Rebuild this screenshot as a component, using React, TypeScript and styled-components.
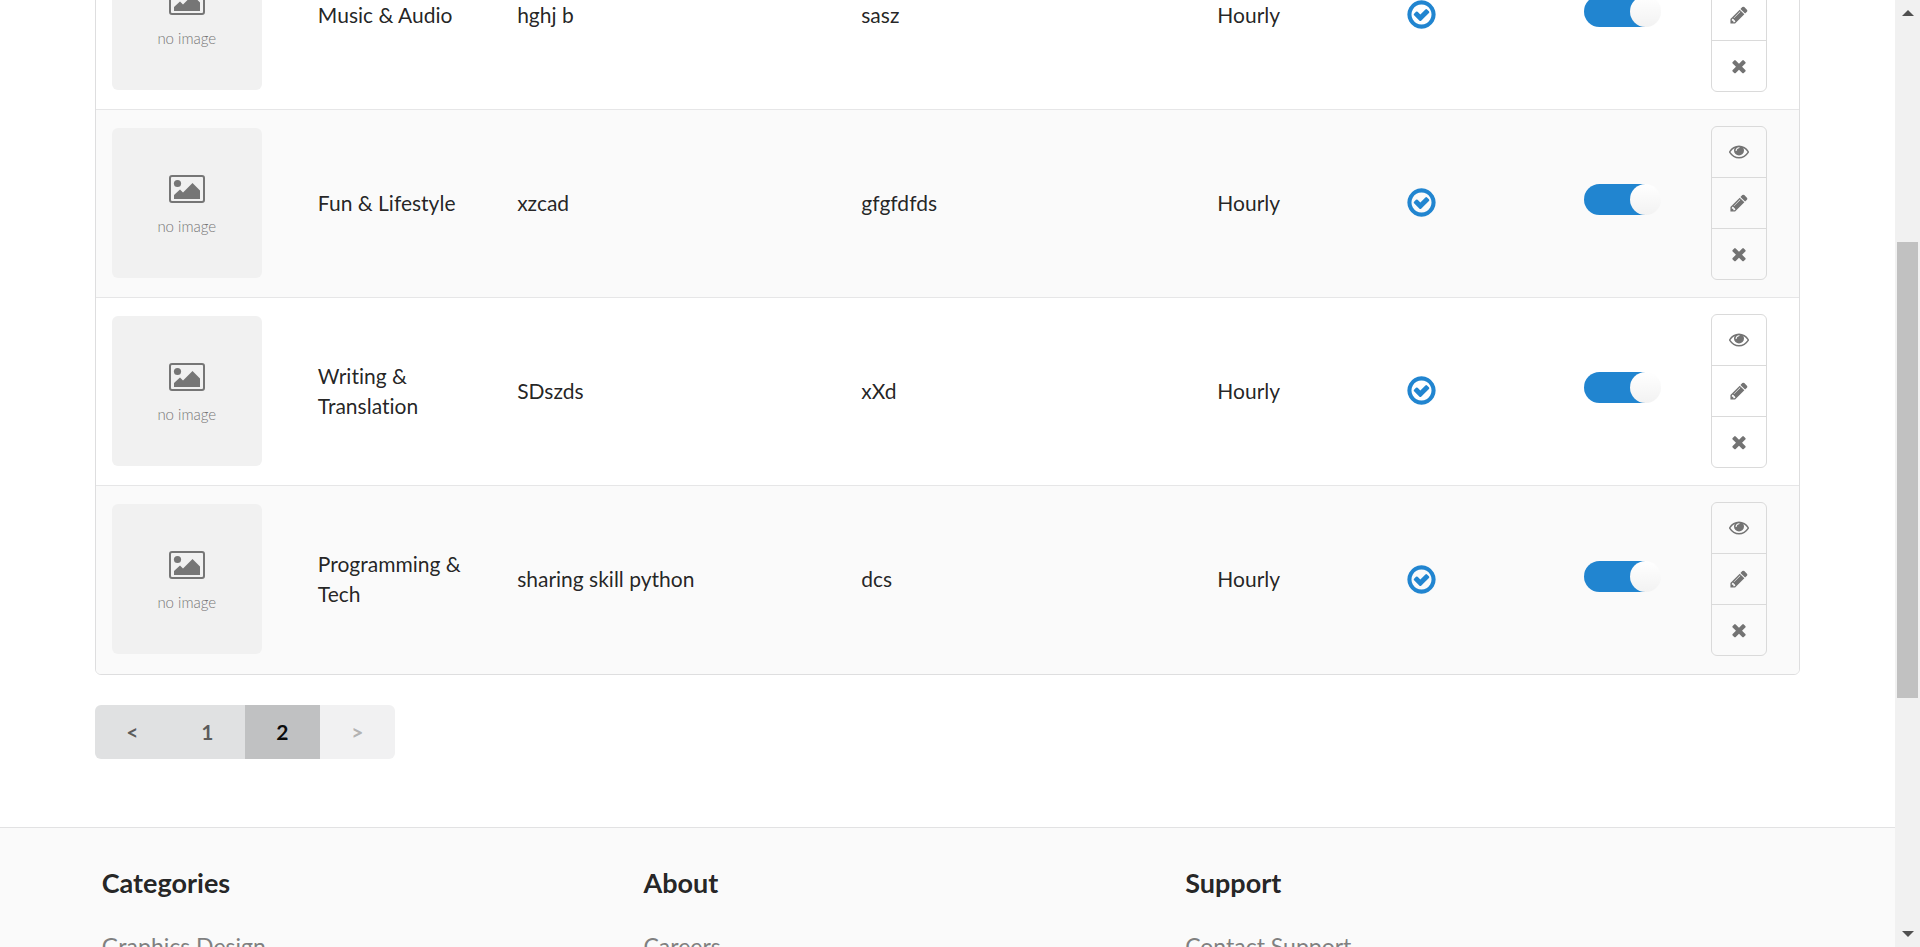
import React from "react";
import styled, { createGlobalStyle, css } from "styled-components";

const GlobalStyle = createGlobalStyle`
  *, *::before, *::after { box-sizing: border-box; }
  html, body, #root { height: 100%; }
  body {
    margin: 0;
    overflow: hidden;
    background: #fff;
    color: rgba(0, 0, 0, 0.87);
    font-family: Lato, "Helvetica Neue", Arial, sans-serif;
    font-size: 21px;
    font-variant-ligatures: no-common-ligatures;
    line-height: 30px;
  }
`;

const Shell = styled.div`
  display: flex;
  height: 100vh;
`;

const Page = styled.div`
  flex: 1;
  min-width: 0;
  overflow: hidden;
`;

const Container = styled.div`
  width: 90%;
  margin: 0 auto;
`;

const Listings = styled(Container).attrs({ as: "main" })`
  margin-top: -80px;
`;

const TableFrame = styled.div`
  border: 1px solid #dededf;
  border-radius: 6px;
  overflow: hidden;
`;

const Table = styled.table`
  width: 100%;
  table-layout: fixed;
  border-collapse: separate;
  border-spacing: 0;
`;

const Col = styled.col<{ $share: string }>`
  width: ${(p) => p.$share};
`;

const Row = styled.tr`
  height: 188px;
  &:nth-child(even) { background: #fafafa; }
  &:last-child { height: 189px; }
`;

const Cell = styled.td`
  padding: 0 16px 2px;
  border-top: 1px solid #e6e6e7;
  vertical-align: middle;
`;

const Thumb = styled.figure`
  display: flex;
  flex-direction: column;
  align-items: center;
  justify-content: center;
  gap: 14px;
  width: 150px;
  height: 150px;
  margin: 0;
  padding-top: 4px;
  border-radius: 6px;
  background: #f1f1f1;
  color: #767676;

  svg { display: block; }
  figcaption {
    font-size: 15px;
    font-weight: 300;
    line-height: 18px;
  }
`;

const ServiceMark = styled.svg`
  display: block;
  width: 33px;
  height: 33px;
  margin-left: -3px;
  fill: #2185d0;
`;

const Toggle = styled.input`
  appearance: none;
  display: block;
  width: 77px;
  height: 31px;
  margin: 0 0 6px;
  border-radius: 16px;
  background: linear-gradient(#2185d0, #2185d0) left / 62px 100% no-repeat;
  cursor: pointer;

  &::after {
    content: "";
    display: block;
    width: 31px;
    height: 31px;
    margin-left: auto;
    border-radius: 50%;
    background: #fff linear-gradient(transparent, rgba(0, 0, 0, 0.05));
  }
`;

const Actions = styled.div`
  display: flex;
  flex-direction: column;
  width: 56px;
  border: 1px solid #dadada;
  border-radius: 6px;
`;

const ActionButton = styled.button`
  display: flex;
  align-items: center;
  justify-content: center;
  height: 51px;
  padding: 0;
  border: 0;
  background: transparent;
  cursor: pointer;

  & + & { border-top: 1px solid #dadada; }
  &:first-child { height: 50px; }
  svg {
    width: 20px;
    height: 20px;
    fill: #737373;
  }
`;

const Pagination = styled.nav`
  display: inline-flex;
  margin: 30px 0 68px;
  border-radius: 6px;
  overflow: hidden;
`;

const PageButton = styled.button<{ $current?: boolean }>`
  width: 75px;
  height: 54px;
  padding: 0;
  border: 0;
  background: #e0e1e2;
  color: rgba(0, 0, 0, 0.6);
  font: bold 21px/30px Lato, sans-serif;
  cursor: pointer;

  ${(p) =>
    p.$current &&
    css`
      background: #c0c1c2;
      color: rgba(0, 0, 0, 0.95);
    `}
  &:disabled {
    background: #f1f1f2;
    color: #b3b3b3;
  }
`;

const Footer = styled.footer`
  padding: 38px 0;
  border-top: 1px solid #e2e2e3;
  background: #fafafa;
`;

const FooterGrid = styled.div`
  display: grid;
  grid-template-columns: 5fr 5fr 5fr 1fr;
  margin: 0 -14px;
`;

const FooterColumn = styled.section`
  padding: 0 21px;

  h3 {
    margin: 0 0 29px;
    font-size: 27px;
    line-height: 34px;
  }
  a {
    color: #808080;
    font-size: 23px;
    line-height: 34px;
    text-decoration: none;
  }
`;

const ScrollRail = styled.div`
  display: flex;
  flex-direction: column;
  width: 25px;
  height: 100%;
  padding: 10px 2px;
  background: #f1f1f1;

  svg {
    display: block;
    flex: none;
    margin: 0 auto;
    fill: #505050;
  }
`;

const ScrollTrack = styled.div`
  display: grid;
  flex: 1;
  grid-template-rows: 226fr 456fr 233fr;
`;

const ScrollThumb = styled.div`
  grid-row: 2;
  background: #c1c1c1;
`;

const icons = {
  check:
    "M1299 813l-422 422q-19 19-45 19t-45-19l-294-294q-19-19-19-45t19-45l102-102q19-19 45-19t45 19l147 147 275-275q19-19 45-19t45 19l102 102q19 19 19 45t-19 45zm141 83q0-148-73-273t-198-198-273-73-273 73-198 198-73 273 73 273 198 198 273 73 273-73 198-198 73-273zm224 0q0 209-103 385.5t-279.5 279.5-385.5 103-385.5-103-279.5-279.5-103-385.5 103-385.5 279.5-279.5 385.5-103 385.5 103 279.5 279.5 103 385.5z",
  view:
    "M1664 896q-152-236-381-353 61 104 61 225 0 185-131.5 316.5t-316.5 131.5-316.5-131.5-131.5-316.5q0-121 61-225-229 117-381 353 133 205 333.5 326.5t434.5 121.5 434.5-121.5 333.5-326.5zm-720-384q0-20-14-34t-34-14q-125 0-214.5 89.5t-89.5 214.5q0 20 14 34t34 14 34-14 14-34q0-86 61-147t147-61q20 0 34-14t14-34zm848 384q0 34-20 69-140 230-376.5 368.5t-499.5 138.5-499.5-139-376.5-368q-20-35-20-69t20-69q140-229 376.5-368t499.5-139 499.5 139 376.5 368q20 35 20 69z",
  edit:
    "M491 1536l91-91-235-235-91 91v107h128v128h107zm523-928q0-22-22-22-10 0-17 7l-542 542q-7 7-7 17 0 22 22 22 10 0 17-7l542-542q7-7 7-17zm-54-192l416 416-832 832h-416v-416zm683 96q0 53-37 90l-166 166-416-416 166-165q36-38 90-38 53 0 91 38l235 234q37 39 37 91z",
  remove:
    "M1490 1322q0 40-28 68l-136 136q-28 28-68 28t-68-28l-294-294-294 294q-28 28-68 28t-68-28l-136-136q-28-28-28-68t28-68l294-294-294-294q-28-28-28-68t28-68l136-136q28-28 68-28t68 28l294 294 294-294q28-28 68-28t68 28l136 136q28 28 28 68t-28 68l-294 294 294 294q28 28 28 68z",
};

const columns = ["12.1%", "11.7%", "20.2%", "20.9%", "11.2%", "10.3%", "7.5%", "6.1%"];

const listings = [
  { category: "Music & Audio", title: "hghj b", description: "sasz" },
  { category: "Fun & Lifestyle", title: "xzcad", description: "gfgfdfds" },
  { category: "Writing & Translation", title: "SDszds", description: "xXd" },
  { category: "Programming & Tech", title: "sharing skill python", description: "dcs" },
];

const footerLinks = [
  { heading: "Categories", link: "Graphics Design" },
  { heading: "About", link: "Careers" },
  { heading: "Support", link: "Contact Support" },
];

function Glyph({ d }: { d: string }) {
  return (
    <svg viewBox="0 0 1792 1792" aria-hidden="true">
      <path d={d} />
    </svg>
  );
}

function NoImage() {
  return (
    <Thumb>
      <svg width="36" height="28" viewBox="0 0 36 28" aria-hidden="true">
        <rect x="1" y="1" width="34" height="26" rx="2" fill="none" stroke="currentColor" strokeWidth="2" />
        <circle cx="8.5" cy="8.5" r="3.6" fill="currentColor" />
        <path d="M5 24v-4l6-5.500 3 3 9.500-9.500 7.500 7.500v8.500z" fill="currentColor" />
      </svg>
      <figcaption>no image</figcaption>
    </Thumb>
  );
}

export default function App() {
  return (
    <>
      <GlobalStyle />
      <Shell>
        <Page>
          <Listings>
            <TableFrame>
              <Table aria-label="Manage listings">
                <colgroup>
                  {columns.map((share, i) => (
                    <Col key={i} $share={share} />
                  ))}
                </colgroup>
                <tbody>
                  {listings.map((item) => (
                    <Row key={item.title}>
                      <Cell><NoImage /></Cell>
                      <Cell>{item.category}</Cell>
                      <Cell>{item.title}</Cell>
                      <Cell>{item.description}</Cell>
                      <Cell>Hourly</Cell>
                      <Cell>
                        <ServiceMark viewBox="0 0 1792 1792" role="img" aria-label="Yes">
                          <path d={icons.check} />
                        </ServiceMark>
                      </Cell>
                      <Cell>
                        <Toggle type="checkbox" role="switch" defaultChecked aria-label={`${item.title} active`} />
                      </Cell>
                      <Cell>
                        <Actions>
                          <ActionButton type="button" aria-label="View"><Glyph d={icons.view} /></ActionButton>
                          <ActionButton type="button" aria-label="Edit"><Glyph d={icons.edit} /></ActionButton>
                          <ActionButton type="button" aria-label="Delete"><Glyph d={icons.remove} /></ActionButton>
                        </Actions>
                      </Cell>
                    </Row>
                  ))}
                </tbody>
              </Table>
            </TableFrame>
            <Pagination aria-label="Pages">
              <PageButton type="button" aria-label="Previous page">&lt;</PageButton>
              <PageButton type="button">1</PageButton>
              <PageButton type="button" $current aria-current="page">2</PageButton>
              <PageButton type="button" disabled aria-label="Next page">&gt;</PageButton>
            </Pagination>
          </Listings>
          <Footer>
            <Container>
              <FooterGrid>
                {footerLinks.map((column) => (
                  <FooterColumn key={column.heading}>
                    <h3>{column.heading}</h3>
                    <a href="#">{column.link}</a>
                  </FooterColumn>
                ))}
              </FooterGrid>
            </Container>
          </Footer>
        </Page>
        <ScrollRail aria-hidden="true">
          <svg width="12" height="6" viewBox="0 0 12 6"><path d="M0 6L6 0l6 6z" /></svg>
          <ScrollTrack><ScrollThumb /></ScrollTrack>
          <svg width="12" height="6" viewBox="0 0 12 6"><path d="M0 0l6 6 6-6z" /></svg>
        </ScrollRail>
      </Shell>
    </>
  );
}
